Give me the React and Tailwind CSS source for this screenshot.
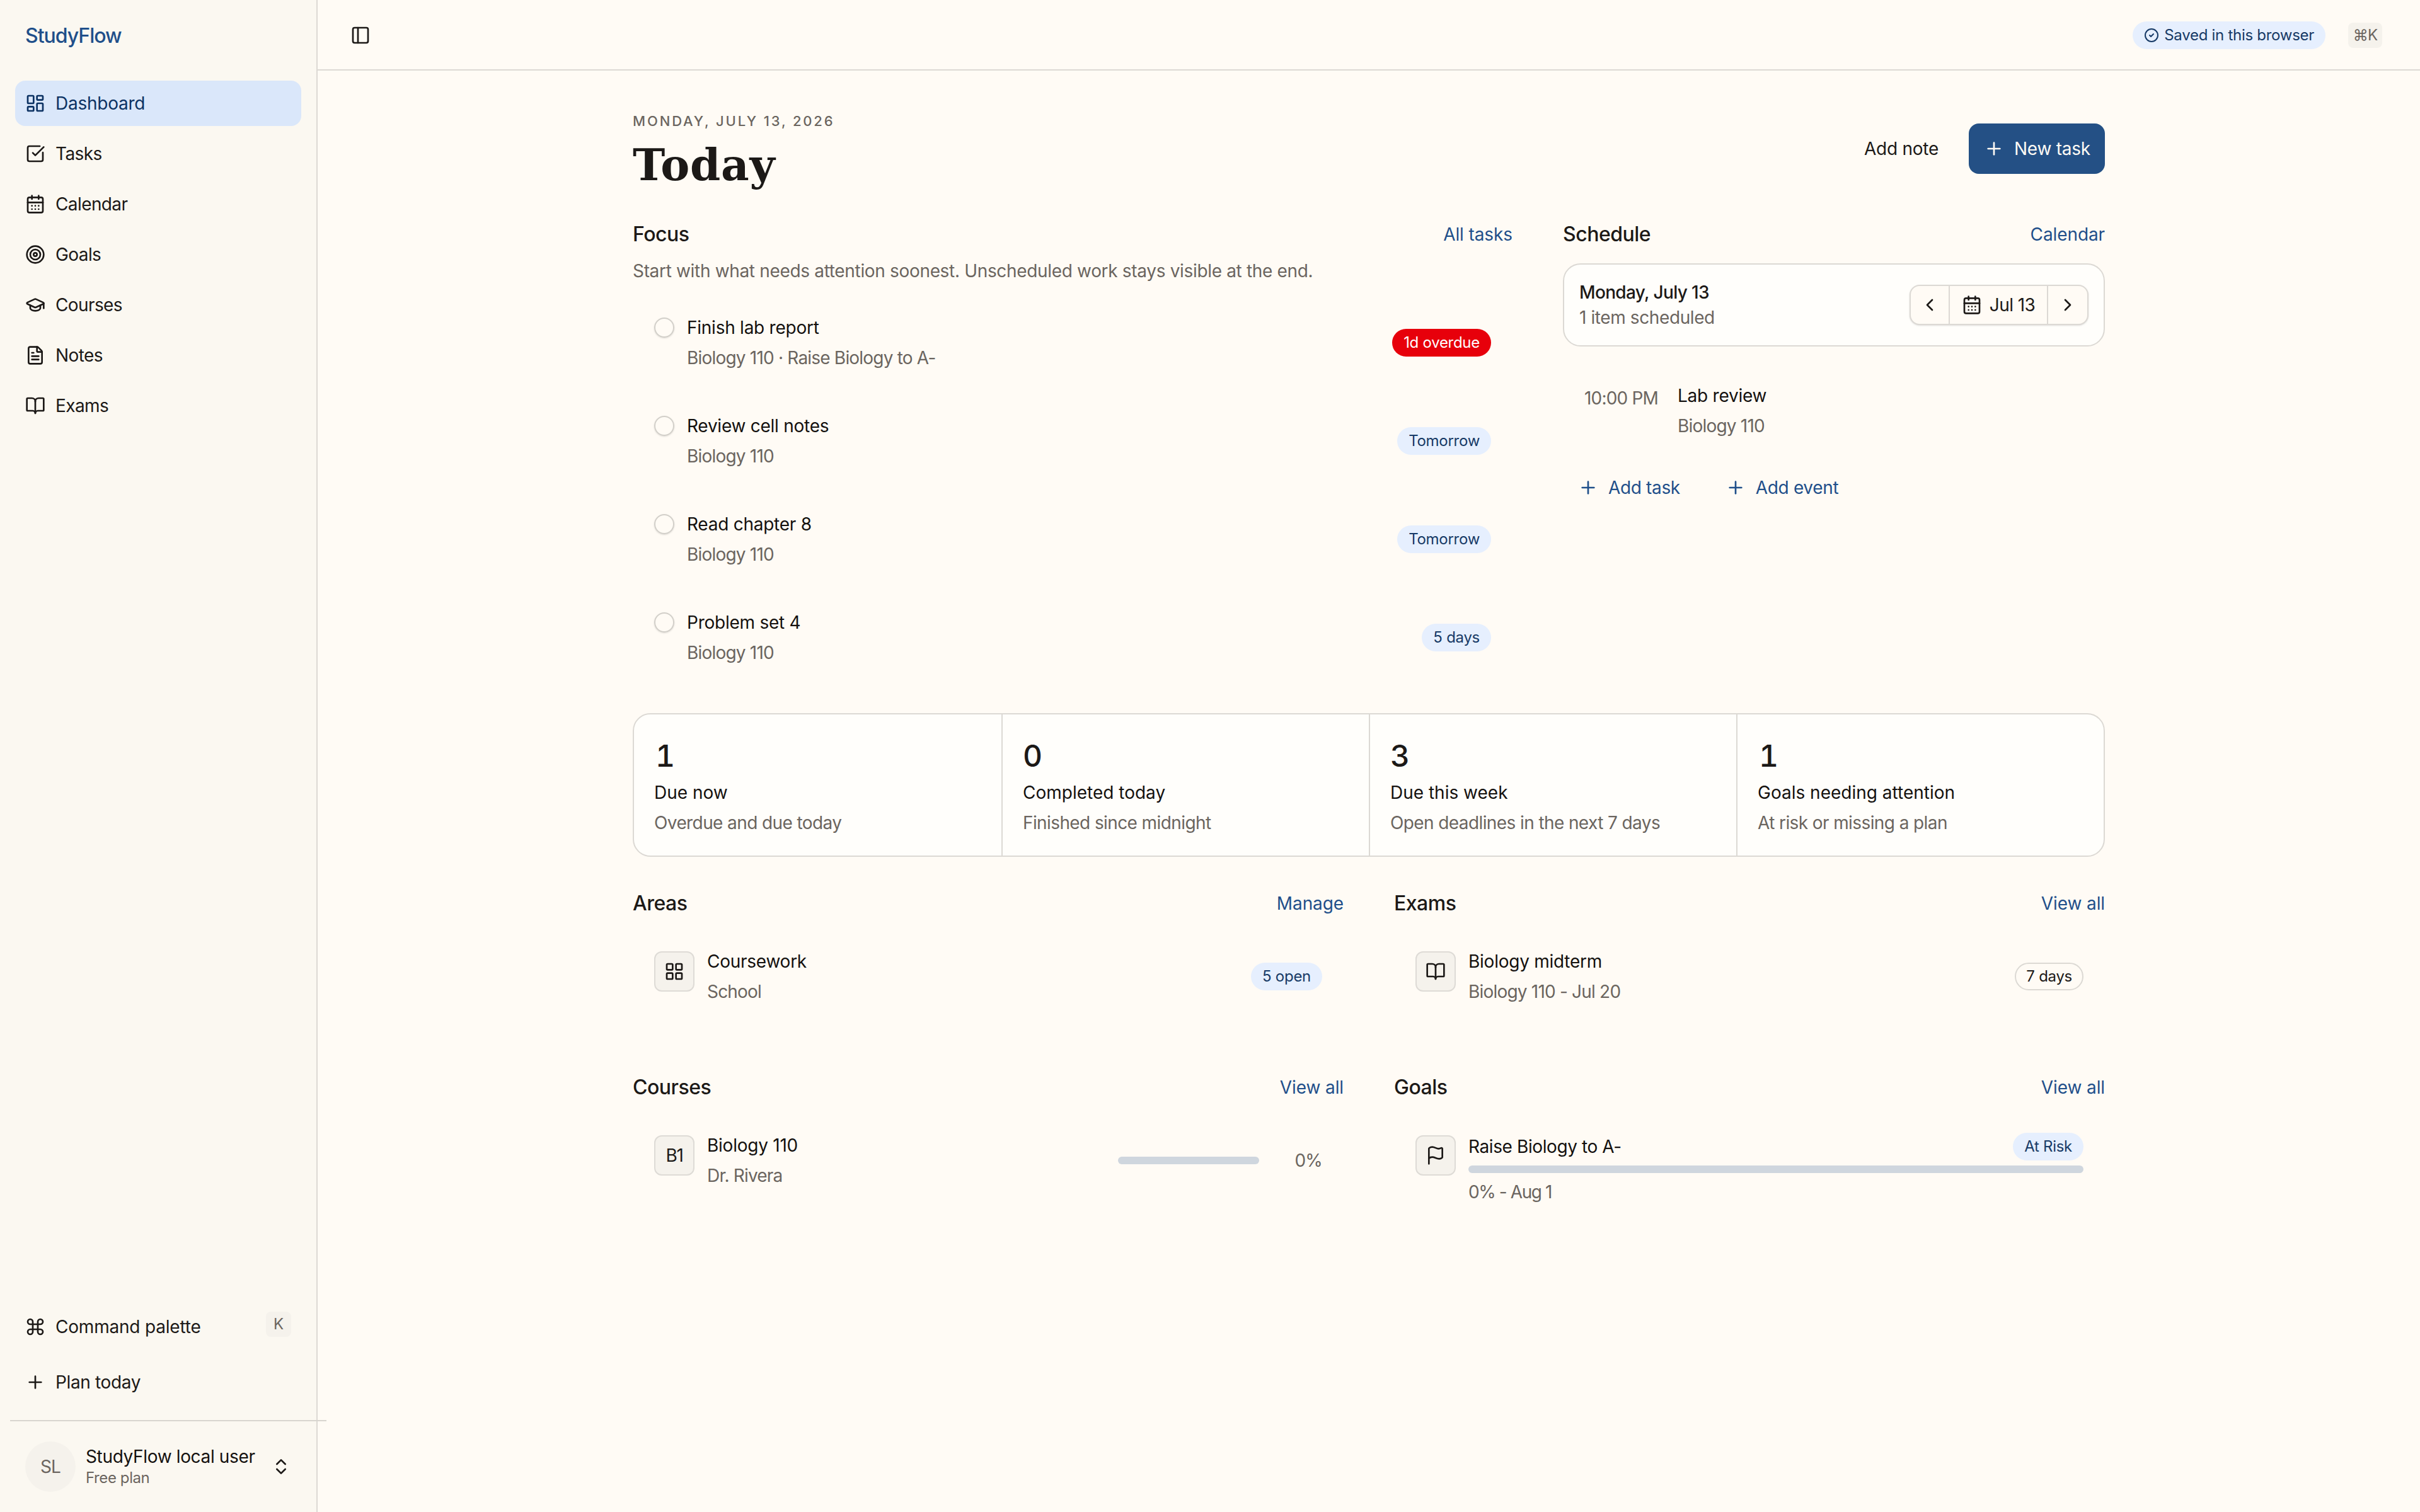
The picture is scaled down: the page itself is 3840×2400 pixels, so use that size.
import {
  LayoutDashboard, SquareCheckBig, CalendarDays, Target, GraduationCap, FileText, BookOpen,
  Command, Plus, ChevronsUpDown, PanelLeft, CircleCheck, ChevronLeft, ChevronRight, LayoutGrid, Flag,
} from "lucide-react";

const nav = [
  { icon: LayoutDashboard, label: "Dashboard", active: true },
  { icon: SquareCheckBig, label: "Tasks" },
  { icon: CalendarDays, label: "Calendar" },
  { icon: Target, label: "Goals" },
  { icon: GraduationCap, label: "Courses" },
  { icon: FileText, label: "Notes" },
  { icon: BookOpen, label: "Exams" },
];

const tasks = [
  { title: "Finish lab report", sub: "Biology 110 · Raise Biology to A-", due: "1d overdue", overdue: true },
  { title: "Review cell notes", sub: "Biology 110", due: "Tomorrow" },
  { title: "Read chapter 8", sub: "Biology 110", due: "Tomorrow" },
  { title: "Problem set 4", sub: "Biology 110", due: "5 days" },
];

const stats = [
  { n: "1", label: "Due now", sub: "Overdue and due today" },
  { n: "0", label: "Completed today", sub: "Finished since midnight" },
  { n: "3", label: "Due this week", sub: "Open deadlines in the next 7 days" },
  { n: "1", label: "Goals needing attention", sub: "At risk or missing a plan" },
];

function Badge({ tone = "soft", children }) {
  const tones = {
    soft: "border-transparent bg-[#e6effe] text-[#173a66]",
    danger: "border-transparent bg-[#e7000b] text-white",
    outline: "border-[#dcd9d4] text-[#1c1917]",
  };
  return (
    <span className={`flex h-11 shrink-0 items-center gap-2 rounded-full border-2 px-4 text-2xl leading-8 font-normal tracking-[-0.28px] whitespace-nowrap ${tones[tone]}`}>
      {children}
    </span>
  );
}

function SectionHead({ title, link }) {
  return (
    <div className="flex h-12 items-center justify-between">
      <h2 className="text-[32px] leading-12 font-medium tracking-[-0.5px]">{title}</h2>
      <a className="text-[28px] leading-10 font-normal tracking-[-0.1px] text-[#1f4f8a]">{link}</a>
    </div>
  );
}

function RowText({ title, sub }) {
  return (
    <div className="flex flex-1 flex-col gap-2">
      <p className="text-[28px] leading-10 font-normal tracking-[-0.25px] text-[#14110f]">{title}</p>
      <p className="text-[28px] leading-10 tracking-[-0.8px] text-[#6b655f]">{sub}</p>
    </div>
  );
}

function IconBox({ children }) {
  return (
    <div className="mt-1 flex size-16 shrink-0 items-center justify-center self-start rounded-xl border-2 border-[#dedbd6] bg-[#f5f2ec] text-[28px] tracking-[-1.4px]">
      {children}
    </div>
  );
}

function Panel({ title, link, children }) {
  return (
    <section className="flex h-[292px] flex-col">
      <SectionHead title={title} link={link} />
      <div className="mt-12 flex h-22 items-center gap-5 px-[34px]">{children}</div>
    </section>
  );
}

export default function App() {
  return (
    <div className="flex h-[2400px] w-[3840px] overflow-hidden bg-[#fffbf5] font-['Inter',sans-serif] text-[#1c1917]">
      <aside className="flex w-[504px] shrink-0 flex-col border-r-2 border-[#dcd9d4] bg-[#fbf8f1]">
        <div className="flex h-28 items-center pt-0.5 pl-10 text-[32px] font-medium tracking-[-1px] text-[#1f4f8a]">StudyFlow</div>
        <nav className="mt-4 flex flex-col gap-2 px-6">
          {nav.map(({ icon: Icon, label, active }) => (
            <a key={label} className={`flex h-18 items-center gap-4 rounded-2xl px-4 text-[28px] ${active ? "bg-[#dae7fa] font-normal tracking-[-0.25px] text-[#0c3263]" : "tracking-[-0.6px]"}`}>
              <Icon size={32} />
              {label}
            </a>
          ))}
        </nav>
        <div className="mt-auto flex flex-col gap-4 px-6 pb-6">
          <div className="flex h-18 items-center gap-4 px-4 text-[28px] tracking-[-0.2px]">
            <Command size={32} />
            <span className="flex-1">Command palette</span>
            <kbd className="mb-2 flex size-10 items-center justify-center rounded-lg bg-[#f5f2ec] font-['Inter',sans-serif] text-2xl font-normal text-[#6b655f]">K</kbd>
          </div>
          <div className="flex h-18 items-center gap-4 px-4 text-[28px] tracking-[-0.35px]">
            <Plus size={32} />
            Plan today
          </div>
        </div>
        <div className="relative z-10 ml-4 h-0.5 w-[502px] shrink-0 bg-[#d8d5cf]" />
        <div className="flex h-36 shrink-0 items-center gap-4 px-10">
          <div className="flex size-20 items-center justify-center rounded-full bg-[#f5f2ec] text-[28px] tracking-[-0.8px] text-[#6b655f]">SL</div>
          <div className="flex-1 whitespace-nowrap">
            <p className="text-[28px] leading-[35px] font-normal tracking-[-0.35px] text-[#14110f]">StudyFlow local user</p>
            <p className="text-2xl leading-8 tracking-[-0.4px] text-[#6b655f]">Free plan</p>
          </div>
          <ChevronsUpDown size={32} />
        </div>
      </aside>

      <main className="flex flex-1 flex-col">
        <header className="flex h-28 shrink-0 items-center border-b-2 border-[#dcd9d4] pt-0.5 pr-[60px] pl-[52px]">
          <PanelLeft size={32} />
          <div className="ml-auto flex items-center gap-9">
            <Badge><CircleCheck size={24} />Saved in this browser</Badge>
            <kbd className="flex h-10 w-[54px] items-center justify-center rounded-lg bg-[#f5f2ec] font-['Inter',sans-serif] text-2xl font-normal tracking-[-0.7px] text-[#6b655f]">⌘K</kbd>
          </div>
        </header>

        <div className="mx-auto w-[2336px] pt-16">
          <div className="flex h-[124px] items-start justify-between">
            <div className="flex flex-col">
              <p className="text-[22px] leading-8 font-medium tracking-[2.85px] text-[#6b655f]">MONDAY, JULY 13, 2026</p>
              <h1 className="mt-2 h-[92px] font-['DejaVu_Serif',serif] text-[69px] leading-[92px] font-bold tracking-[0.8px]">Today</h1>
            </div>
            <div className="mt-5 flex items-center gap-12 text-[28px] font-normal tracking-[-0.25px]">
              <span>Add note</span>
              <button className="flex h-20 w-[216px] items-center gap-4 rounded-2xl bg-[#245085] pl-6 whitespace-nowrap text-[#fffbf5]">
                <Plus size={32} />
                New task
              </button>
            </div>
          </div>

          <div className="mt-12 flex gap-20">
            <section className="w-[1396px]">
              <SectionHead title="Focus" link="All tasks" />
              <p className="mt-3 text-[28px] leading-11 tracking-[-0.33px] text-[#6b655f]">
                Start with what needs attention soonest. Unscheduled work stays visible at the end.
              </p>
              <ul className="mt-[14px]">
                {tasks.map((t) => (
                  <li key={t.title} className="flex h-[156px] items-center gap-5 px-[34px]">
                    <span className="mb-12 size-8 rounded-full border-2 border-[#d2cfc9] shadow-sm" />
                    <RowText title={t.title} sub={t.sub} />
                    <Badge tone={t.overdue ? "danger" : "soft"}>{t.due}</Badge>
                  </li>
                ))}
              </ul>
            </section>

            <section className="w-[860px]">
              <SectionHead title="Schedule" link="Calendar" />
              <div className="mt-[22px] flex h-[132px] items-center justify-between rounded-[28px] border-2 border-[#dcd9d4] bg-[#fffefb] px-6">
                <div className="text-[28px] leading-10">
                  <p className="font-medium tracking-[-0.65px]">Monday, July 13</p>
                  <p className="tracking-[-0.4px] text-[#6b655f]">1 item scheduled</p>
                </div>
                <div className="flex h-16 w-[284px] rounded-2xl border-2 border-[#dcd9d4] bg-[#fffbf5] shadow-sm">
                  <span className="flex w-[60px] items-center justify-center"><ChevronLeft size={32} /></span>
                  <span className="flex flex-1 items-center justify-center gap-3 border-x-2 border-[#dcd9d4] text-[28px] font-normal tracking-[-0.6px]">
                    <CalendarDays size={32} />Jul 13
                  </span>
                  <span className="flex w-[62px] items-center justify-center"><ChevronRight size={32} /></span>
                </div>
              </div>
              <div className="mt-[58px] flex pl-[34px]">
                <p className="mt-1 w-[148px] text-[28px] leading-10 tracking-[-0.8px] text-[#6b655f]">10:00 PM</p>
                <RowText title="Lab review" sub="Biology 110" />
              </div>
              <div className="mt-[58px] flex h-10 items-center gap-[72px] pl-6 text-[28px] font-normal tracking-[-0.35px] text-[#1f4f8a]">
                <span className="flex items-center gap-4"><Plus size={32} />Add task</span>
                <span className="flex items-center gap-4"><Plus size={32} />Add event</span>
              </div>
            </section>
          </div>

          <div className="mt-[42px] grid h-[228px] grid-cols-4 rounded-[28px] border-2 border-[#dcd9d4] bg-[#fffefb]">
            {stats.map((s, i) => (
              <div key={s.label} className={`px-8 pt-[34px] ${i ? "border-l-2 border-[#dcd9d4]" : ""}`}>
                <p className={`text-5xl leading-[64px] font-medium tabular-nums ${s.n === "1" ? "pl-0.5" : ""}`}>{s.n}</p>
                <p className="mt-1.5 text-[28px] leading-10 font-normal text-[#14110f]">{s.label}</p>
                <p className="mt-2 text-[28px] leading-10 tracking-[-0.6px] text-[#6b655f]">{s.sub}</p>
              </div>
            ))}
          </div>

          <div className="mt-[50px] grid grid-cols-2 gap-x-20">
            <Panel title="Areas" link="Manage">
              <IconBox><LayoutGrid size={32} /></IconBox>
              <RowText title="Coursework" sub="School" />
              <Badge>5 open</Badge>
            </Panel>
            <Panel title="Exams" link="View all">
              <IconBox><BookOpen size={32} /></IconBox>
              <RowText title="Biology midterm" sub="Biology 110 - Jul 20" />
              <Badge tone="outline">7 days</Badge>
            </Panel>
            <Panel title="Courses" link="View all">
              <IconBox>B1</IconBox>
              <RowText title="Biology 110" sub="Dr. Rivera" />
              <div className="h-3 w-56 rounded-full bg-[#cfd6de]" />
              <p className="w-20 text-right text-[28px] tracking-[-0.8px] text-[#6b655f]">0%</p>
            </Panel>
            <Panel title="Goals" link="View all">
              <IconBox><Flag size={32} /></IconBox>
              <div className="flex flex-1 flex-col pt-[26px]">
                <div className="flex h-11 items-center justify-between">
                  <p className="text-[28px] leading-10 font-normal tracking-[-0.4px] text-[#14110f]">Raise Biology to A-</p>
                  <Badge>At Risk</Badge>
                </div>
                <div className="mt-2 h-3 rounded-full bg-[#cfd6de]" />
                <p className="mt-2.5 text-[28px] leading-10 tracking-[-1.4px] text-[#6b655f]">0% - Aug 1</p>
              </div>
            </Panel>
          </div>
        </div>
      </main>
    </div>
  );
}
